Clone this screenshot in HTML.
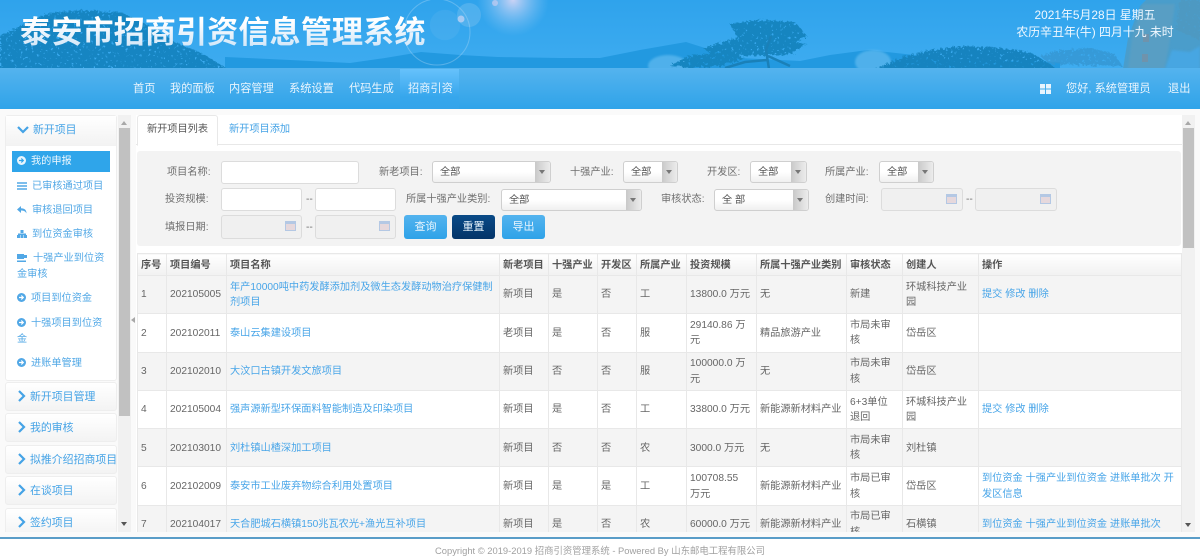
<!DOCTYPE html>
<html lang="zh-CN">
<head>
<meta charset="utf-8">
<title>泰安市招商引资信息管理系统</title>
<style>
*{box-sizing:border-box}
html,body{margin:0;padding:0}
body{width:1200px;height:560px;overflow:hidden;position:relative;background:#fff;font-family:"Liberation Sans","Noto Sans CJK SC",sans-serif;font-size:10.2px;color:#666}
body>*{filter:blur(.3px)}
.abs{position:absolute}
#banner{left:0;top:0;width:1200px;height:69px;overflow:hidden}
#title{left:20px;top:11px;font-size:31.2px;line-height:44px;font-weight:700;white-space:nowrap;background:linear-gradient(#fff 25%,#cfe5f8 85%);-webkit-background-clip:text;background-clip:text;color:transparent}
#date{left:995px;width:200px;top:7px;text-align:center;color:#f0f8ff;font-size:11.9px;line-height:17px}
#nav{left:0;top:68px;width:1200px;height:41px;background:linear-gradient(#54b3ee,#2fa3e9);font-size:11.2px}
#nav span{position:absolute;top:13px;line-height:16px;color:#eaf5fd;white-space:nowrap}
#act{left:400px;top:1px;width:59px;height:40px;background:linear-gradient(#66c1fb,#36a6ec 70%,#33a4ea)}
#wrap{left:0;top:109px;width:1200px;height:428px;background:#fafafa}
#line{left:0;top:537px;width:1200px;height:2px;background:#5a9dc8}
#foot{left:0;top:544px;width:1200px;text-align:center;color:#a0a0a0;font-size:9.4px;line-height:14px}
.sb{width:13px;background:#f1f1f1}
.thumb{position:absolute;left:1px;width:11px;background:#c1c1c1}
.up,.down{position:absolute;left:3px;width:0;height:0;border-left:3.5px solid transparent;border-right:3.5px solid transparent}
.up{border-bottom:4px solid #a8a8a8;top:6px}
.down{border-top:4px solid #555}
.panel{position:absolute;left:5px;width:112px;background:linear-gradient(#fff,#f3f3f3);border:1px solid #eee;border-radius:3px;color:#45a3e6;font-size:10.9px;line-height:16px;white-space:nowrap}
.panel i{position:absolute;left:12px;top:7px}
.panel b{position:absolute;left:24px;top:6px;font-weight:400}
#sidebox{left:0;top:115px;width:118px;height:417px;overflow:hidden}
#menu{position:absolute;left:5px;top:0;width:112px;height:266px;background:#fff;border:1px solid #eee;border-radius:3px}
#mh{position:absolute;left:0;top:0;width:110px;height:30px;background:linear-gradient(#fff,#f2f2f2);color:#45a3e6;font-size:10.9px}
.mi{position:absolute;left:12px;width:95px;color:#52a8e6;line-height:16px;white-space:nowrap}
.mi svg{vertical-align:-1px;margin-right:3px}
#main{left:136px;top:115px;width:1046px;height:417px;overflow:hidden;background:#fff}
#tabs{position:absolute;left:0;top:0;width:1046px;height:30px;border-bottom:1px solid #e8e8e8}
#t1{position:absolute;left:1px;top:0;width:81px;height:31px;background:#fff;border:1px solid #e8e8e8;border-bottom:1px solid #fff;border-radius:3px 3px 0 0;text-align:center;line-height:28px;color:#555}
#t2{position:absolute;left:93px;top:7px;color:#45a3e6;line-height:16px}
#filter{position:absolute;left:1px;top:36px;width:1044px;height:95px;background:#f3f3f3;border-radius:3px}
.l{position:absolute;line-height:16px;color:#6f6f6f;white-space:nowrap}
.inp{position:absolute;background:#fff;border:1px solid #dcdcdc;border-radius:3px}
.dis{background:#f0f0f0}
.dis svg{position:absolute;right:5px;top:5px}
.sel{position:absolute;background:linear-gradient(#fff 50%,#efefef);border:1px solid #cfcfcf;border-radius:3px;color:#555;line-height:22px;padding-left:7px;overflow:hidden}
.sel:after{content:"";position:absolute;right:0;top:0;bottom:0;width:15px;background:linear-gradient(90deg,#c9c9c9,#ececec)}
.sel:before{content:"";position:absolute;z-index:1;right:5px;top:8px;border-left:3px solid transparent;border-right:3px solid transparent;border-top:4px solid #777}
.btn{position:absolute;border-radius:3px;color:#e9f5fd;text-align:center;line-height:24px;font-size:11px;background:linear-gradient(#53b3ee,#2ea2e8)}
#table{position:absolute;left:1px;top:138px;width:1044px;border-collapse:collapse;table-layout:fixed;background:#fff;color:#666}
#table th,#table td{border:1px solid #e8e8e8;padding:1px 3px 0 3px;line-height:15.5px;text-align:left;word-break:break-all;overflow:hidden}
#table th{height:22px;padding-top:2px;font-weight:700;color:#555;background:linear-gradient(#fff,#f1f1f1);white-space:nowrap}
#table td{height:38.3px}
#table tr:nth-child(even) td{background:#f4f4f4}
#table a{color:#48a5e8;text-decoration:none}
</style>
</head>
<body>

<div id="banner" class="abs">
<svg width="1200" height="69" viewBox="0 0 1200 69" style="position:absolute;left:0;top:0">
<defs>
<linearGradient id="sky" x1="0" y1="0" x2="0" y2="1"><stop offset="0" stop-color="#2fa3ec"/><stop offset="1" stop-color="#3eacf0"/></linearGradient>
<radialGradient id="glow"><stop offset="0" stop-color="#dcd8f6" stop-opacity=".9"/><stop offset="1" stop-color="#8cc8f5" stop-opacity="0"/></radialGradient>
<filter id="soft"><feGaussianBlur stdDeviation="1"/></filter>
<filter id="fol" x="-5%" y="-5%" width="110%" height="110%">
<feTurbulence type="fractalNoise" baseFrequency=".35" numOctaves="2" seed="3" result="n"/>
<feDisplacementMap in="SourceGraphic" in2="n" scale="7" result="d"/>
<feColorMatrix in="n" type="matrix" values="0 0 0 0 0 0 0 0 0 0 0 0 0 0 0 0 0 0 -9 6.8" result="m"/>
<feComposite in="d" in2="m" operator="in"/>
</filter>
</defs>
<rect width="1200" height="69" fill="url(#sky)"/>
<path d="M225 69V57L290 60 350 63 385 58 421 52 460 55 498 57 560 58 600 58 640 50 686 42 705 48 740 58 800 61 830 55 868 50 914 55 960 60 1060 62 1060 69Z" fill="#2299e0"/>
<ellipse cx="668" cy="66" rx="20" ry="11" fill="#62bbf0" opacity=".7" filter="url(#soft)"/>
<ellipse cx="873" cy="62" rx="18" ry="12" fill="#62bbf0" opacity=".7" filter="url(#soft)"/>
<path d="M0 69V36L20 26 45 14 80 10 120 12 150 26 175 42 205 55 226 68V69Z" fill="#1685c2" filter="url(#fol)"/>
<path d="M730 24L760 20 795 22 807 36 795 42 770 46 740 42ZM703 48L735 38 780 40 807 44 790 54 740 56 712 55ZM669 66L690 56 725 52 745 58 720 66 690 68Z" fill="#1585c0" filter="url(#fol)"/>
<path d="M769 69L766 50 771 36M767 60L745 62 725 68M768 56L790 66" stroke="#1a80b8" stroke-width="2.5" fill="none"/>
<path d="M876 69L900 58 930 50 960 46 1000 48 1030 52 1050 64 1056 69Z" fill="#1583bf" filter="url(#fol)"/>
<path d="M1040 56L1060 50 1090 48 1115 54 1122 66 1050 64Z" fill="#3597d3" opacity=".8" filter="url(#fol)"/>
<path d="M1123 69L1128 38 1140 6 1146 0H1200V69Z" fill="#4a9dcb"/>
<path d="M1128 69L1132 38 1143 4H1175L1170 40 1165 69Z" fill="#5b9fc3" opacity=".8" filter="url(#soft)"/>
<path d="M1165 69L1172 50 1190 52 1200 46V69Z" fill="#46a6e2" filter="url(#soft)"/>
<path d="M1180 0L1176 30 1200 40V0Z" fill="#4f98bf" opacity=".75" filter="url(#fol)"/>
<g fill="#7a8fa3" opacity=".7"><rect x="1142" y="54" width="6" height="8"/><rect x="1143" y="34" width="6" height="8"/></g>
<circle cx="513" cy="0" r="36" fill="url(#glow)"/>
<circle cx="469" cy="15" r="12" fill="#a9d2f4" opacity=".25"/>
<circle cx="461" cy="19" r="3.500" fill="#e0dcf6" opacity=".6"/>
<circle cx="437" cy="32" r="33" fill="none" stroke="#b9dcf6" stroke-width="1" opacity=".35"/>
<circle cx="445" cy="25" r="15" fill="#a9d2f4" opacity=".1" stroke="#b9dcf6" stroke-width=".7" stroke-opacity=".3"/>
<circle cx="495" cy="3" r="3" fill="#d5d0f2" opacity=".6"/>
</svg>
<div id="title" class="abs">泰安市招商引资信息管理系统</div>
<div id="date" class="abs">2021年5月28日 星期五<br>农历辛丑年(牛) 四月十九 未时</div>
</div>

<div id="nav" class="abs">
<div id="act" class="abs"></div>
<span style="left:133px">首页</span>
<span style="left:170px">我的面板</span>
<span style="left:229px">内容管理</span>
<span style="left:289px">系统设置</span>
<span style="left:349px">代码生成</span>
<span style="left:408px">招商引资</span>
<svg class="abs" style="left:1040px;top:16px" width="11" height="10"><path d="M0 0h5v4.500H0zM6 0h5v4.500H6zM0 5.500h5v4.500H0zM6 5.500h5v4.500H6z" fill="#e8f4fd"/></svg>
<span style="left:1066px">您好, 系统管理员</span>
<span style="left:1168px">退出</span>
</div>

<div id="wrap" class="abs"></div>

<div id="sidebox" class="abs">
<div id="menu">
<div id="mh">
<svg style="position:absolute;left:11px;top:10px" width="12" height="8"><path d="M1 1l5 5 5-5" stroke="#45a3e6" stroke-width="2.2" fill="none"/></svg>
<span style="position:absolute;left:27px;top:6px;line-height:16px">新开项目</span>
</div>
<div class="abs" style="left:6px;top:35px;width:98px;height:21px;background:#2fa5ea"></div>
<div class="mi" style="left:11px;top:38px;color:#eef8fe"><svg width="9" height="9" style="margin-right:5px"><circle cx="4.500" cy="4.500" r="4.500" fill="#e8f5fd"/><path d="M2 4.500h4M4.300 2.500l2 2-2 2" stroke="#2fa5ea" stroke-width="1.200" fill="none"/></svg>我的申报</div>
<div class="mi" style="left:11px;top:63px"><svg width="10" height="8" style="margin-right:5px"><path d="M0 1h10M0 4h10M0 7h10" stroke="#52a8e6" stroke-width="1.500"/></svg>已审核通过项目</div>
<div class="mi" style="left:11px;top:87px"><svg width="10" height="8" style="margin-right:5px"><path d="M4 0L0 3.500 4 7V4.500c3 0 4.500 1 5.500 3C9.500 4 7.500 2.300 4 2.300z" fill="#52a8e6"/></svg>审核退回项目</div>
<div class="mi" style="left:11px;top:111px"><svg width="10" height="8" style="margin-right:5px"><path d="M3.500 0h3v3h-3zM0 5h3v3H0zM3.500 5h3v3h-3zM7 5h3v3H7zM1 3.500h8V5H1z" fill="#52a8e6"/></svg>到位资金审核</div>
<div class="mi" style="left:11px;top:135px;width:96px"><svg width="10" height="8" style="margin-right:6px"><path d="M0 0h7v5H0zM7 1h3v3H7zM0 6.500h9V8H0z" fill="#52a8e6"/></svg>十强产业到位资<br>金审核</div>
<div class="mi" style="left:11px;top:175px"><svg width="9" height="9" style="margin-right:5px"><circle cx="4.500" cy="4.500" r="4.500" fill="#52a8e6"/><path d="M2 4.500h4M4.300 2.500l2 2-2 2" stroke="#fff" stroke-width="1.200" fill="none"/></svg>项目到位资金</div>
<div class="mi" style="left:11px;top:200px;width:96px"><svg width="9" height="9" style="margin-right:5px"><circle cx="4.500" cy="4.500" r="4.500" fill="#52a8e6"/><path d="M2 4.500h4M4.300 2.500l2 2-2 2" stroke="#fff" stroke-width="1.200" fill="none"/></svg>十强项目到位资<br>金</div>
<div class="mi" style="left:11px;top:240px"><svg width="9" height="9" style="margin-right:5px"><circle cx="4.500" cy="4.500" r="4.500" fill="#52a8e6"/><path d="M2 4.500h4M4.300 2.500l2 2-2 2" stroke="#fff" stroke-width="1.200" fill="none"/></svg>进账单管理</div>
</div>
<div class="panel" style="top:267px;height:29px"><i><svg width="8" height="12"><path d="M1 1l5 5-5 5" stroke="#45a3e6" stroke-width="2.200" fill="none"/></svg></i><b>新开项目管理</b></div>
<div class="panel" style="top:298px;height:29px"><i><svg width="8" height="12"><path d="M1 1l5 5-5 5" stroke="#45a3e6" stroke-width="2.200" fill="none"/></svg></i><b>我的审核</b></div>
<div class="panel" style="top:330px;height:29px"><i><svg width="8" height="12"><path d="M1 1l5 5-5 5" stroke="#45a3e6" stroke-width="2.200" fill="none"/></svg></i><b>拟推介绍招商项目</b></div>
<div class="panel" style="top:361px;height:29px"><i><svg width="8" height="12"><path d="M1 1l5 5-5 5" stroke="#45a3e6" stroke-width="2.200" fill="none"/></svg></i><b>在谈项目</b></div>
<div class="panel" style="top:393px;height:29px"><i><svg width="8" height="12"><path d="M1 1l5 5-5 5" stroke="#45a3e6" stroke-width="2.200" fill="none"/></svg></i><b>签约项目</b></div>
</div>

<div class="abs sb" style="left:118px;top:115px;height:417px"><div class="up"></div><div class="thumb" style="top:13px;height:288px"></div><div class="down" style="top:407px"></div></div>
<div class="abs" style="left:131px;top:317px;border-top:3.500px solid transparent;border-bottom:3.500px solid transparent;border-right:4px solid #a8a8a8"></div>

<div id="main" class="abs">
<div id="tabs"><div id="t1">新开项目列表</div><div id="t2">新开项目添加</div></div>
<div id="filter">
<span class="l" style="left:30px;top:14px">项目名称:</span>
<div class="inp" style="left:84px;top:10px;width:138px;height:23px"></div>
<span class="l" style="left:242px;top:14px">新老项目:</span>
<div class="sel" style="left:295px;top:10px;width:119px;height:22px">全部</div>
<span class="l" style="left:433px;top:14px">十强产业:</span>
<div class="sel" style="left:486px;top:10px;width:55px;height:22px">全部</div>
<span class="l" style="left:570px;top:14px">开发区:</span>
<div class="sel" style="left:613px;top:10px;width:57px;height:22px">全部</div>
<span class="l" style="left:688px;top:14px">所属产业:</span>
<div class="sel" style="left:742px;top:10px;width:55px;height:22px">全部</div>

<span class="l" style="left:28px;top:41px">投资规模:</span>
<div class="inp" style="left:84px;top:37px;width:81px;height:23px"></div>
<span class="l" style="left:169px;top:41px">--</span>
<div class="inp" style="left:178px;top:37px;width:81px;height:23px"></div>
<span class="l" style="left:269px;top:41px">所属十强产业类别:</span>
<div class="sel" style="left:364px;top:38px;width:141px;height:22px">全部</div>
<span class="l" style="left:524px;top:41px">审核状态:</span>
<div class="sel" style="left:577px;top:38px;width:95px;height:22px">全 部</div>
<span class="l" style="left:688px;top:41px">创建时间:</span>
<div class="inp dis" style="left:744px;top:37px;width:82px;height:23px"><svg width="11" height="10"><rect width="11" height="10" fill="#b4c8e4"/><rect x="1" y="3" width="9" height="6" fill="#e6d8dc"/></svg></div>
<span class="l" style="left:829px;top:41px">--</span>
<div class="inp dis" style="left:838px;top:37px;width:82px;height:23px"><svg width="11" height="10"><rect width="11" height="10" fill="#b4c8e4"/><rect x="1" y="3" width="9" height="6" fill="#e6d8dc"/></svg></div>

<span class="l" style="left:28px;top:69px">填报日期:</span>
<div class="inp dis" style="left:84px;top:64px;width:81px;height:24px"><svg width="11" height="10"><rect width="11" height="10" fill="#b4c8e4"/><rect x="1" y="3" width="9" height="6" fill="#e6d8dc"/></svg></div>
<span class="l" style="left:169px;top:69px">--</span>
<div class="inp dis" style="left:178px;top:64px;width:81px;height:24px"><svg width="11" height="10"><rect width="11" height="10" fill="#b4c8e4"/><rect x="1" y="3" width="9" height="6" fill="#e6d8dc"/></svg></div>
<div class="btn" style="left:267px;top:64px;width:43px;height:24px">查询</div>
<div class="btn" style="left:315px;top:64px;width:43px;height:24px;background:linear-gradient(#0a4a87,#033468)">重置</div>
<div class="btn" style="left:365px;top:64px;width:43px;height:24px">导出</div>
</div>

<table id="table">
<colgroup><col style="width:29px"><col style="width:60px"><col style="width:273px"><col style="width:49px"><col style="width:49px"><col style="width:39px"><col style="width:50px"><col style="width:70px"><col style="width:90px"><col style="width:56px"><col style="width:76px"><col style="width:203px"></colgroup>
<tr><th>序号</th><th>项目编号</th><th>项目名称</th><th>新老项目</th><th>十强产业</th><th>开发区</th><th>所属产业</th><th>投资规模</th><th>所属十强产业类别</th><th>审核状态</th><th>创建人</th><th>操作</th></tr>
<tr><td>1</td><td>202105005</td><td><a>年产10000吨中药发酵添加剂及微生态发酵动物治疗保健制<br>剂项目</a></td><td>新项目</td><td>是</td><td>否</td><td>工</td><td>13800.0 万元</td><td>无</td><td>新建</td><td>环城科技产业<br>园</td><td><a>提交 修改 删除</a></td></tr>
<tr><td>2</td><td>202102011</td><td><a>泰山云集建设项目</a></td><td>老项目</td><td>是</td><td>否</td><td>服</td><td>29140.86 万<br>元</td><td>精品旅游产业</td><td>市局未审<br>核</td><td>岱岳区</td><td></td></tr>
<tr><td>3</td><td>202102010</td><td><a>大汶口古镇开发文旅项目</a></td><td>新项目</td><td>否</td><td>否</td><td>服</td><td>100000.0 万<br>元</td><td>无</td><td>市局未审<br>核</td><td>岱岳区</td><td></td></tr>
<tr><td>4</td><td>202105004</td><td><a>强声源新型环保面料智能制造及印染项目</a></td><td>新项目</td><td>是</td><td>否</td><td>工</td><td>33800.0 万元</td><td>新能源新材料产业</td><td>6+3单位<br>退回</td><td>环城科技产业<br>园</td><td><a>提交 修改 删除</a></td></tr>
<tr><td>5</td><td>202103010</td><td><a>刘杜镇山楂深加工项目</a></td><td>新项目</td><td>否</td><td>否</td><td>农</td><td>3000.0 万元</td><td>无</td><td>市局未审<br>核</td><td>刘杜镇</td><td></td></tr>
<tr><td>6</td><td>202102009</td><td><a>泰安市工业废弃物综合利用处置项目</a></td><td>新项目</td><td>是</td><td>是</td><td>工</td><td>100708.55<br>万元</td><td>新能源新材料产业</td><td>市局已审<br>核</td><td>岱岳区</td><td><a>到位资金 十强产业到位资金 进账单批次 开<br>发区信息</a></td></tr>
<tr><td>7</td><td>202104017</td><td><a>天合肥城石横镇150兆瓦农光+渔光互补项目</a></td><td>新项目</td><td>是</td><td>否</td><td>农</td><td>60000.0 万元</td><td>新能源新材料产业</td><td>市局已审<br>核</td><td>石横镇</td><td><a>到位资金 十强产业到位资金 进账单批次</a></td></tr>
</table>
</div>

<div class="abs sb" style="left:1182px;top:115px;height:417px"><div class="up"></div><div class="thumb" style="top:13px;height:120px"></div><div class="down" style="top:408px"></div></div>

<div id="line" class="abs"></div>
<div id="foot" class="abs">Copyright © 2019-2019 招商引资管理系统 - Powered By 山东邮电工程有限公司</div>
</body>
</html>
